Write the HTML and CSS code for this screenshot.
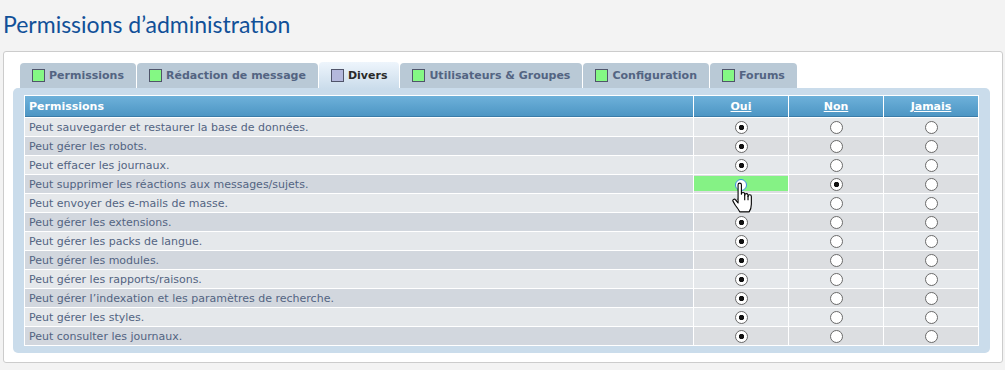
FILE: index.html
```html
<!DOCTYPE html>
<html>
<head>
    <title>Permissions d’administration</title>
    <meta charset="utf-8">
    <link rel="stylesheet" href="styles.css">
</head>
<body>
    <h1>Permissions d’administration</h1>

    <div class="panel">
        <ul class="tabs">
            <li class="tab"><span class="flag yes"></span>Permissions</li>
            <li class="tab"><span class="flag yes"></span>Rédaction de message</li>
            <li class="tab active"><span class="flag mixed"></span>Divers</li>
            <li class="tab"><span class="flag yes"></span>Utilisateurs &amp; Groupes</li>
            <li class="tab"><span class="flag yes"></span>Configuration</li>
            <li class="tab"><span class="flag yes"></span>Forums</li>
        </ul>

        <div class="tab-body">
            <table class="perm-table">
                <thead>
                    <tr>
                        <th class="name">Permissions</th>
                        <th class="opt"><a href="#">Oui</a></th>
                        <th class="opt"><a href="#">Non</a></th>
                        <th class="opt"><a href="#">Jamais</a></th>
                    </tr>
                </thead>
                <tbody>
                    <tr>
                        <td class="name">Peut sauvegarder et restaurer la base de données.</td>
                        <td class="opt"><span class="radio on"></span></td>
                        <td class="opt"><span class="radio"></span></td>
                        <td class="opt"><span class="radio"></span></td>
                    </tr>
                    <tr>
                        <td class="name">Peut gérer les robots.</td>
                        <td class="opt"><span class="radio on"></span></td>
                        <td class="opt"><span class="radio"></span></td>
                        <td class="opt"><span class="radio"></span></td>
                    </tr>
                    <tr>
                        <td class="name">Peut effacer les journaux.</td>
                        <td class="opt"><span class="radio on"></span></td>
                        <td class="opt"><span class="radio"></span></td>
                        <td class="opt"><span class="radio"></span></td>
                    </tr>
                    <tr>
                        <td class="name">Peut supprimer les réactions aux messages/sujets.</td>
                        <td class="opt hover">
                            <span class="radio focus"></span>
                            <svg class="pointer" width="21" height="31" viewBox="0 0 19 28">
                                <path d="M5.5,2.5 a1.5,1.5 0 0 1 3,0 V11 a1.5,1.5 0 0 1 3,0 V12 a1.5,1.5 0 0 1 3,0 V13 a1.5,1.5 0 0 1 3,0 V20 q0,4 -2,7 H7 q-1.5,-3 -4,-6 l-2,-3.5 a1.3,1.3 0 0 1 2.2,-1.4 L5.5,19 Z" fill="#fff" stroke="#000" stroke-width="1" stroke-linejoin="round"/>
                                <path d="M11.5,11.5 V16.5 M14.5,12.5 V16.5" stroke="#000" stroke-width="1" fill="none"/>
                            </svg>
                        </td>
                        <td class="opt"><span class="radio on"></span></td>
                        <td class="opt"><span class="radio"></span></td>
                    </tr>
                    <tr>
                        <td class="name">Peut envoyer des e-mails de masse.</td>
                        <td class="opt"><span class="radio on"></span></td>
                        <td class="opt"><span class="radio"></span></td>
                        <td class="opt"><span class="radio"></span></td>
                    </tr>
                    <tr>
                        <td class="name">Peut gérer les extensions.</td>
                        <td class="opt"><span class="radio on"></span></td>
                        <td class="opt"><span class="radio"></span></td>
                        <td class="opt"><span class="radio"></span></td>
                    </tr>
                    <tr>
                        <td class="name">Peut gérer les packs de langue.</td>
                        <td class="opt"><span class="radio on"></span></td>
                        <td class="opt"><span class="radio"></span></td>
                        <td class="opt"><span class="radio"></span></td>
                    </tr>
                    <tr>
                        <td class="name">Peut gérer les modules.</td>
                        <td class="opt"><span class="radio on"></span></td>
                        <td class="opt"><span class="radio"></span></td>
                        <td class="opt"><span class="radio"></span></td>
                    </tr>
                    <tr>
                        <td class="name">Peut gérer les rapports/raisons.</td>
                        <td class="opt"><span class="radio on"></span></td>
                        <td class="opt"><span class="radio"></span></td>
                        <td class="opt"><span class="radio"></span></td>
                    </tr>
                    <tr>
                        <td class="name">Peut gérer l’indexation et les paramètres de recherche.</td>
                        <td class="opt"><span class="radio on"></span></td>
                        <td class="opt"><span class="radio"></span></td>
                        <td class="opt"><span class="radio"></span></td>
                    </tr>
                    <tr>
                        <td class="name">Peut gérer les styles.</td>
                        <td class="opt"><span class="radio on"></span></td>
                        <td class="opt"><span class="radio"></span></td>
                        <td class="opt"><span class="radio"></span></td>
                    </tr>
                    <tr>
                        <td class="name">Peut consulter les journaux.</td>
                        <td class="opt"><span class="radio on"></span></td>
                        <td class="opt"><span class="radio"></span></td>
                        <td class="opt"><span class="radio"></span></td>
                    </tr>
                </tbody>
            </table>
        </div>
    </div>
</body>
</html>
```

FILE: styles.css
```css
body {
    margin: 0;
    padding: 0 2px 0 3px;
    background-color: #f3f3f3;
    font-family: 'DejaVu Sans', Verdana, sans-serif;
    font-size: 11px;
    color: #536482;
}

h1 {
    margin: 0;
    padding: 10px 0 0 0;
    height: 51px;
    box-sizing: border-box;
    font-family: 'Lato', 'Open Sans', sans-serif;
    font-weight: normal;
    font-size: 23px;
    color: #115098;
}

.panel {
    background-color: #fff;
    border: 1px solid #ccc;
    border-radius: 3px;
    padding: 10px 12px 9px 9px;
}

.tabs {
    list-style: none;
    margin: 0 0 0 7px;
    padding: 0;
    display: flex;
    align-items: flex-end;
    gap: 1px;
}

.tab {
    display: flex;
    align-items: center;
    gap: 4px;
    height: 25px;
    padding: 0 12px 0 12px;
    background-color: #b9c9d6;
    border-radius: 4px 4px 0 0;
    font-weight: bold;
    font-size: 11px;
    color: #536482;
}

.tab.active {
    height: 27px;
    margin-bottom: -1px;
    background: linear-gradient(#eef5fc, #cadceb);
    color: #2a2a2a;
    position: relative;
}

.flag {
    width: 11px;
    height: 11px;
    border: 1px solid #50546a;
    background-color: #84f884;
}

.flag.mixed {
    background-color: #b4b8dc;
}

.tab-body {
    background-color: #cadceb;
    border-radius: 5px;
    padding: 7px 11px 7px 11px;
}

.perm-table {
    width: 100%;
    border-collapse: separate;
    border-spacing: 1px;
    background-color: #fff;
}

.perm-table th {
    height: 20px;
    padding: 0 4px;
    background: linear-gradient(#6eb1da, #4d96c4);
    border-bottom: 1px solid #3b7ca8;
    color: #fff;
    font-weight: bold;
    font-size: 11px;
    text-align: left;
}

.perm-table th.opt {
    width: 86px;
    text-align: center;
}

.perm-table th a {
    color: #fff;
}

.perm-table td {
    height: 18px;
    padding: 0 4px;
    background-color: #e5e8eb;
}

.perm-table tbody tr:nth-child(even) td {
    background-color: #dcdee1;
}

.perm-table tbody tr:nth-child(even) td.name {
    background-color: #d2d7de;
}

.perm-table td.opt {
    text-align: center;
    position: relative;
}

.perm-table tbody tr td.opt.hover {
    background-color: #85f285;
    box-shadow: inset 0 1px 0 #dcdee1, inset 0 -2px 0 #dcdee1;
}

.radio {
    display: inline-block;
    vertical-align: middle;
    width: 11px;
    height: 11px;
    border: 1px solid #6a6a6a;
    border-radius: 50%;
    background-color: #fff;
}

.radio.on {
    background: radial-gradient(circle, #111 2.4px, #fff 3px);
}

.radio.focus {
    width: 10px;
    height: 10px;
    border: 1.5px solid #3d8fe0;
}

.pointer {
    position: absolute;
    left: 38px;
    top: 7px;
    z-index: 2;
}
```
